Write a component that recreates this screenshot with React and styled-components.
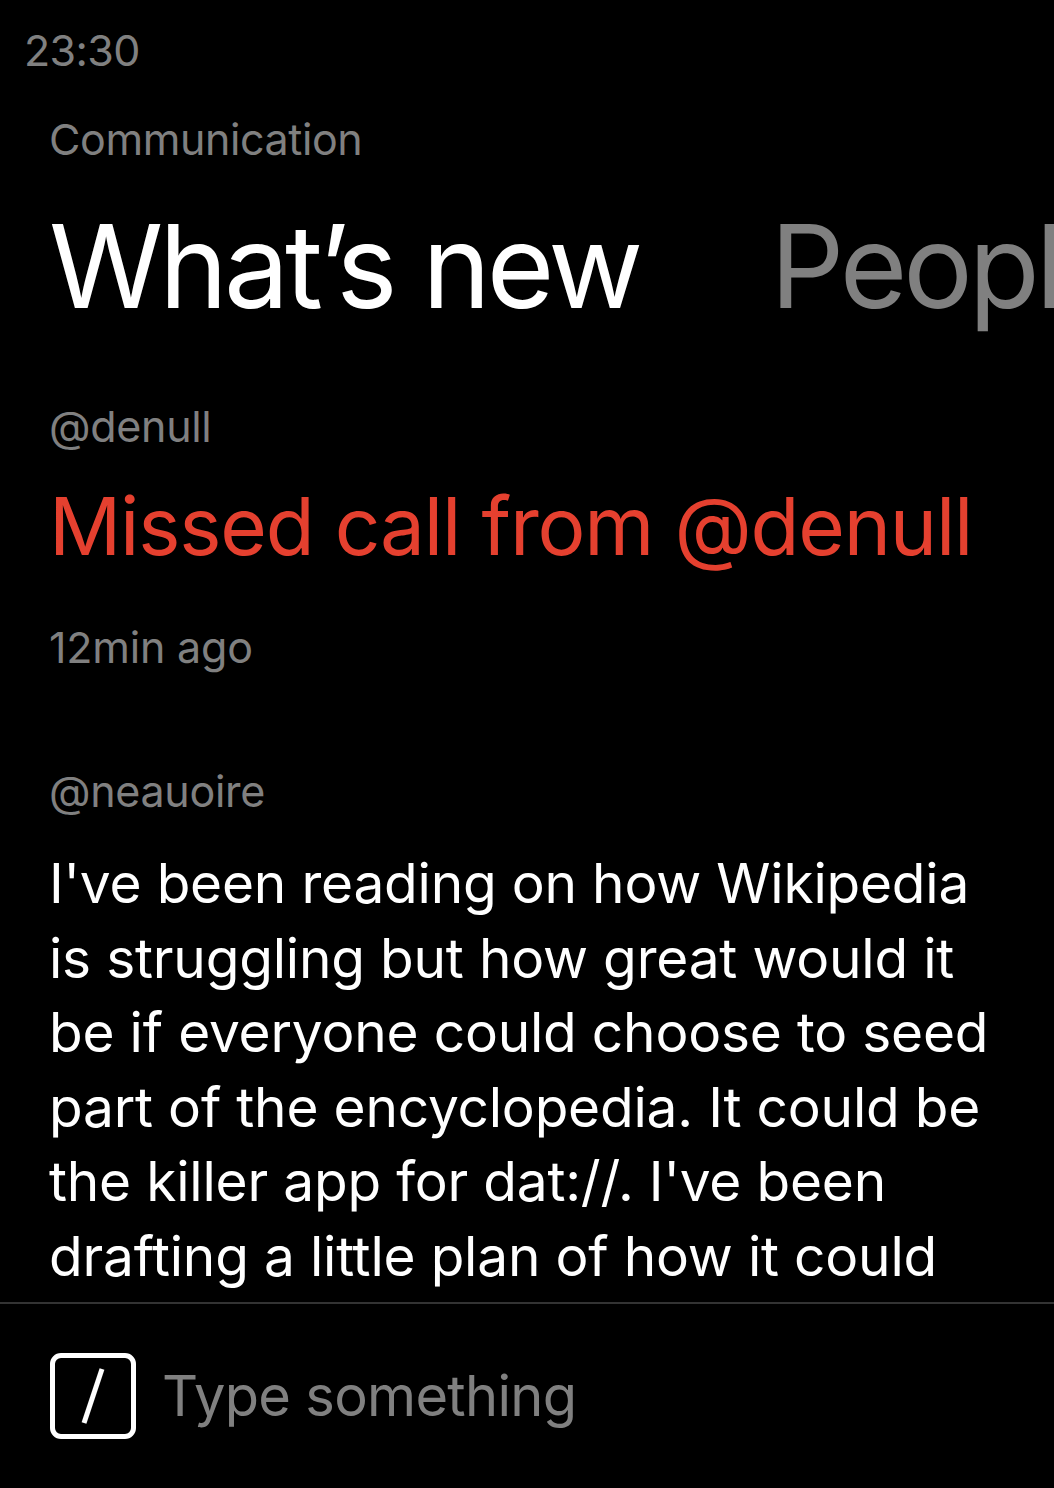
import React from "react";
import styled, { createGlobalStyle } from "styled-components";

const GlobalStyle = createGlobalStyle`
  html, body {
    margin: 0;
    padding: 0;
    background: #000;
  }
  body {
    font-family: Inter, "Noto Sans", "Liberation Sans", sans-serif;
    -webkit-font-smoothing: antialiased;
  }
  * { box-sizing: border-box; }
`;

const GRAY = "#808080";
const RED = "#e5402f";

const Screen = styled.div`
  width: 1054px;
  height: 1488px;
  background: #000;
  color: #fff;
  display: flex;
  flex-direction: column;
  overflow: hidden;
`;

const StatusBar = styled.div`
  padding: 24px 24px 0;
  font-size: 43px;
  line-height: 52px;
  color: ${GRAY};
  letter-spacing: -0.6px;
`;

const Header = styled.header`
  padding: 37px 0 0 49px;
  display: flex;
  flex-direction: column;
`;

const Category = styled.div`
  font-size: 43px;
  line-height: 52px;
  letter-spacing: -0.4px;
  color: ${GRAY};
`;

const Tabs = styled.nav`
  margin-top: 31px;
  display: flex;
  gap: 131px;
  white-space: nowrap;
  overflow: hidden;
`;

const Tab = styled.div`
  font-size: 116px;
  line-height: 140px;
  letter-spacing: -4px;
  color: ${(p) => (p.$active ? "#fff" : GRAY)};
  flex-shrink: 0;
`;

const Feed = styled.main`
  flex: 1;
  min-height: 0;
  overflow: hidden;
  padding: 64px 50px 0 49px;
  display: flex;
  flex-direction: column;
  gap: 92px;
`;

const Post = styled.article`
  display: flex;
  flex-direction: column;
`;

const Author = styled.div`
  font-size: 43px;
  line-height: 52px;
  letter-spacing: -0.3px;
  color: ${GRAY};
`;

const Alert = styled.div`
  margin-top: 26px;
  font-size: 80px;
  line-height: 96px;
  color: ${RED};
  letter-spacing: -1.2px;
  white-space: nowrap;
`;

const Meta = styled.div`
  margin-top: 47px;
  font-size: 43px;
  line-height: 52px;
  letter-spacing: -0.2px;
  color: ${GRAY};
`;

const Body = styled.p`
  margin: 29px 0 0;
  font-size: 55px;
  line-height: 74.5px;
  letter-spacing: -0.2px;
  color: #fff;
`;

const Footer = styled.footer`
  height: 186px;
  flex-shrink: 0;
  border-top: 2px solid #333;
  padding: 0 50px;
  display: flex;
  align-items: center;
  gap: 26px;
`;

const KeyBox = styled.div`
  width: 86px;
  height: 86px;
  border: 5.5px solid #fff;
  border-radius: 11px;
  display: flex;
  align-items: center;
  justify-content: center;
  flex-shrink: 0;
`;

const Placeholder = styled.div`
  font-size: 56px;
  line-height: 70px;
  letter-spacing: -0.7px;
  color: ${GRAY};
`;

export default function App() {
  return (
    <>
      <GlobalStyle />
      <Screen>
        <StatusBar>23:30</StatusBar>
        <Header>
          <Category>Communication</Category>
          <Tabs>
            <Tab $active>What’s new</Tab>
            <Tab>People</Tab>
          </Tabs>
        </Header>
        <Feed>
          <Post>
            <Author>@denull</Author>
            <Alert>Missed call from @denull</Alert>
            <Meta>12min ago</Meta>
          </Post>
          <Post>
            <Author>@neauoire</Author>
            <Body>
              I've been reading on how Wikipedia is struggling but how great
              would it be if everyone could choose to seed part of the
              encyclopedia. It could be the killer app for dat://. I've been
              drafting a little plan of how it could work, and what the
              incentives would be for people to participate in it.
            </Body>
          </Post>
        </Feed>
        <Footer>
          <KeyBox>
            <svg width="40" height="60" viewBox="0 0 40 60" aria-hidden="true">
              <line
                x1="29"
                y1="3"
                x2="11"
                y2="57"
                stroke="#fff"
                strokeWidth="5"
              />
            </svg>
          </KeyBox>
          <Placeholder>Type something</Placeholder>
        </Footer>
      </Screen>
    </>
  );
}
